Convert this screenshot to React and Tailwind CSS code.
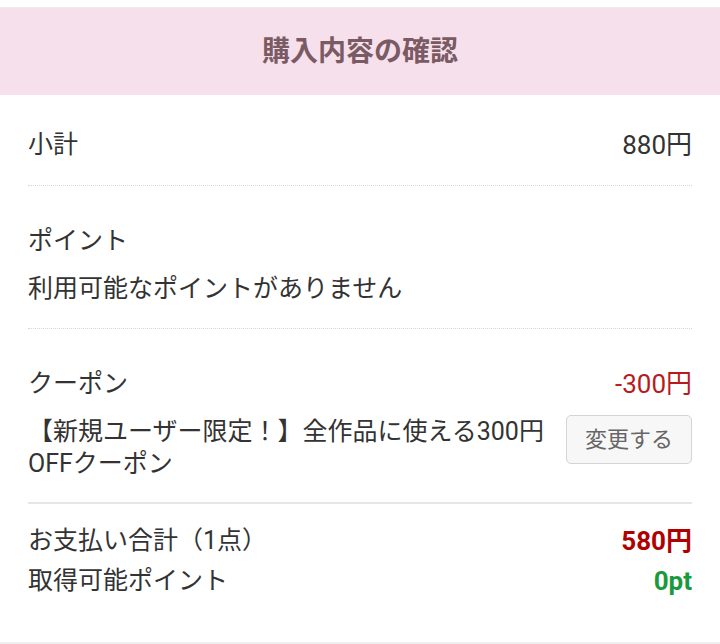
export default function App() {
  const font = { fontFamily: 'Roboto, "Noto Sans CJK JP", sans-serif' };
  return (
    <div className="w-[720px] h-[644px] bg-white text-[#333] overflow-hidden" style={font}>
      <div className="h-[8px] bg-white border-b border-[#ececec]" />
      <div className="h-[87px] bg-[#f5e0ec] flex items-center justify-center">
        <h1 className="text-[28px] font-bold text-[#7a5a63]">購入内容の確認</h1>
      </div>
      <div className="px-[28px] border-b-2 border-[#f0f0f0] h-[549px]">
        <div className="pt-[31px] pb-[21px] flex justify-between text-[25px] leading-[38px] border-b border-dotted border-[#d6d6d6]">
          <span>小計</span>
          <span className="text-[26px]">880円</span>
        </div>
        <div className="pt-[36px] pb-[20px] text-[25px] leading-[38px] border-b border-dotted border-[#d6d6d6] flex flex-col gap-[10px]">
          <span>ポイント</span>
          <span>利用可能なポイントがありません</span>
        </div>
        <div className="pt-[36px] pb-[22px] border-b-2 border-[#e6e6e6]">
          <div className="flex justify-between text-[25px] leading-[38px]">
            <span>クーポン</span>
            <span className="text-[26px] text-[#b71c1c]">-300円</span>
          </div>
          <div className="mt-[13px] flex justify-between items-start">
            <p className="text-[25px] leading-[32px] whitespace-nowrap">
              【新規ユーザー限定！】全作品に使える300円<br />OFFクーポン
            </p>
            <button className="shrink-0 mt-[-1px] w-[126px] h-[49px] rounded-[5px] border border-[#d4d4d4] bg-[#f7f7f7] text-[22px] text-[#666]">
              変更する
            </button>
          </div>
        </div>
        <div className="pt-[17px] text-[25px] leading-[40px]">
          <div className="flex justify-between">
            <span>お支払い合計（1点）</span>
            <span className="text-[26px] font-bold text-[#b00000]">580円</span>
          </div>
          <div className="flex justify-between">
            <span>取得可能ポイント</span>
            <span className="text-[26px] font-bold text-[#1a9a3c]">0pt</span>
          </div>
        </div>
      </div>
    </div>
  );
}
